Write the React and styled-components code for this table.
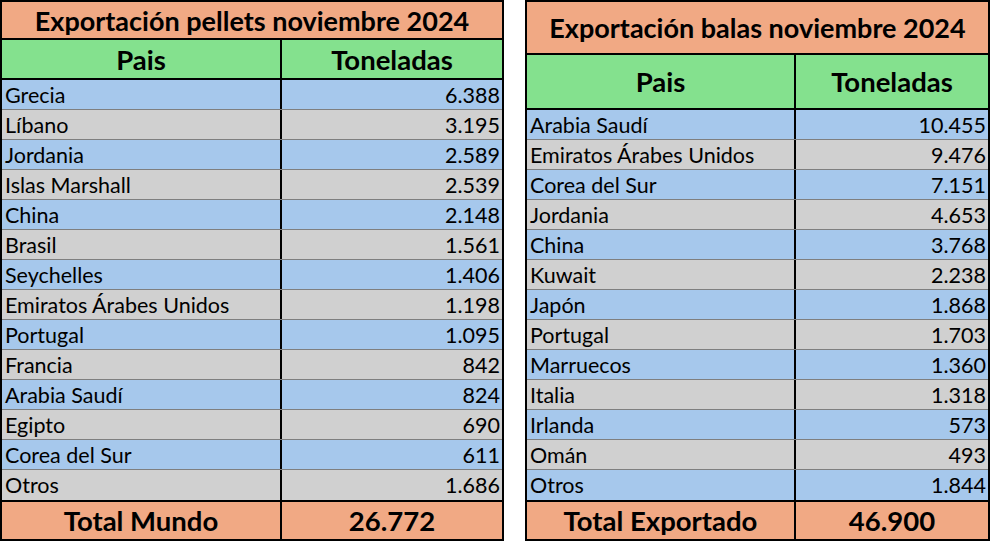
import React from 'react';
import styled, { createGlobalStyle } from 'styled-components';

const GlobalStyle = createGlobalStyle`
  html, body {
    margin: 0;
    padding: 0;
    background: #ffffff;
  }
  body {
    font-family: Lato, "Liberation Sans", sans-serif;
    color: #000;
  }
`;

const Page = styled.div`
  display: flex;
  align-items: flex-start;
  gap: 21px;
  width: 991px;
  height: 544px;
`;

const Sheet = styled.div`
  width: ${({ $width }) => $width}px;
  border: 2px solid #000;
  box-sizing: border-box;
  display: flex;
  flex-direction: column;
`;

const Title = styled.div`
  height: ${({ $height }) => $height}px;
  background: #f1a984;
  border-bottom: 2px solid #000;
  display: flex;
  align-items: center;
  justify-content: center;
  font-weight: 700;
  font-size: 27px;
`;

const Row = styled.div`
  display: grid;
  grid-template-columns: ${({ $left }) => $left}px 1fr;
  height: ${({ $height }) => $height}px;
  background: ${({ $bg }) => $bg};
  border-top: ${({ $top }) => $top || '0'};
  border-bottom: ${({ $line }) => $line || '0'};
  box-sizing: border-box;
`;

const Cell = styled.div`
  display: flex;
  align-items: center;
  justify-content: ${({ $align }) => $align || 'flex-start'};
  padding: 0 ${({ $pad }) => $pad || 0}px;
  font-size: ${({ $bold }) => ($bold ? 27.5 : 21.5)}px;
  font-weight: ${({ $bold }) => ($bold ? 700 : 400)};
  white-space: nowrap;
  overflow: hidden;
  & + & {
    border-left: 2px solid #000;
  }
`;

const BLUE = '#a6c8ec';
const GREY = '#d0d0d0';
const GREEN = '#84e18e';
const ORANGE = '#f1a984';

const pellets = [
  ['Grecia', '6.388'],
  ['Líbano', '3.195'],
  ['Jordania', '2.589'],
  ['Islas Marshall', '2.539'],
  ['China', '2.148'],
  ['Brasil', '1.561'],
  ['Seychelles', '1.406'],
  ['Emiratos Árabes Unidos', '1.198'],
  ['Portugal', '1.095'],
  ['Francia', '842'],
  ['Arabia Saudí', '824'],
  ['Egipto', '690'],
  ['Corea del Sur', '611'],
  ['Otros', '1.686'],
];

const balas = [
  ['Arabia Saudí', '10.455'],
  ['Emiratos Árabes Unidos', '9.476'],
  ['Corea del Sur', '7.151'],
  ['Jordania', '4.653'],
  ['China', '3.768'],
  ['Kuwait', '2.238'],
  ['Japón', '1.868'],
  ['Portugal', '1.703'],
  ['Marruecos', '1.360'],
  ['Italia', '1.318'],
  ['Irlanda', '573'],
  ['Omán', '493'],
  ['Otros', '1.844'],
];

const ExportTable = ({ width, left, title, titleHeight, headHeight, rows, totalLabel, total }) => (
  <Sheet $width={width}>
    <Title $height={titleHeight}>{title}</Title>
    <Row $left={left} $height={headHeight} $bg={GREEN} $line="2px solid #000">
      <Cell $align="center" $bold>Pais</Cell>
      <Cell $align="center" $bold>Toneladas</Cell>
    </Row>
    {rows.map(([pais, ton], i) => (
      <Row
        key={pais}
        $left={left}
        $height={30}
        $bg={i % 2 === 0 ? BLUE : GREY}
        $line={i === rows.length - 1 ? '0' : '1px solid #7f7f7f'}
      >
        <Cell $pad={3}>{pais}</Cell>
        <Cell $align="flex-end" $pad={2}>{ton}</Cell>
      </Row>
    ))}
    <Row $left={left} $height={39} $bg={ORANGE} $top="2px solid #000">
      <Cell $align="center" $bold>{totalLabel}</Cell>
      <Cell $align="center" $bold>{total}</Cell>
    </Row>
  </Sheet>
);

export default function App() {
  return (
    <>
      <GlobalStyle />
      <Page>
        <ExportTable
          width={504}
          left={278}
          title="Exportación pellets noviembre 2024"
          titleHeight={36}
          headHeight={40}
          rows={pellets}
          totalLabel="Total Mundo"
          total="26.772"
        />
        <ExportTable
          width={465}
          left={267}
          title="Exportación balas noviembre 2024"
          titleHeight={51}
          headHeight={55}
          rows={balas}
          totalLabel="Total Exportado"
          total="46.900"
        />
      </Page>
    </>
  );
}
